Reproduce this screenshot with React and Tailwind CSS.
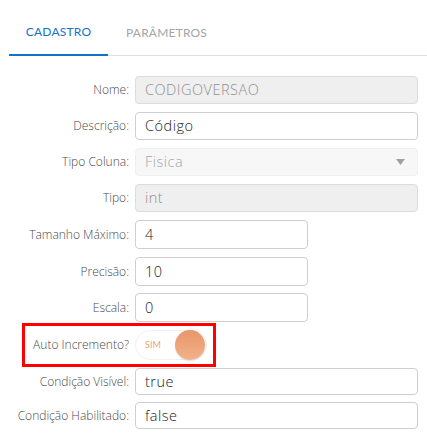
import React from "react";

const font = { fontFamily: "Lato, 'Noto Sans', sans-serif" };
const fieldFont = { fontFamily: "'Open Sans', 'Noto Sans', sans-serif" };

function Label({ children }) {
  return (
    <div
      className="w-[129px] shrink-0 text-right text-[12px] font-light text-[#4a4a4a] whitespace-nowrap"
      style={fieldFont}
    >
      {children}
    </div>
  );
}

function Input({ value, disabled, narrow, h = "h-[28px]" }) {
  return (
    <div
      style={fieldFont}
      className={`${h} ${narrow ? "w-[173px]" : "w-[283px]"} flex items-center rounded-[4px] border px-[9px] text-[14.5px] font-light tracking-[0.5px] ${
        disabled
          ? "bg-[#efefef] border-[#dcdcdc] text-[#8f8f8f]"
          : "bg-white border-[#cfcfcf] text-[#222]"
      }`}
    >
      {value}
    </div>
  );
}

function Row({ label, children, className = "" }) {
  return (
    <div className={`flex items-center gap-[6px] ${className}`}>
      <Label>{label}</Label>
      {children}
    </div>
  );
}

export default function App() {
  return (
    <div className="w-[427px] h-[434px] bg-white overflow-hidden" style={font}>
      <div className="ml-[9px] flex h-[56px] border-b border-[#e2e2e2]">
        <div className="h-[56px] w-[99px] -mb-px flex items-center justify-center pt-[10px] border-b-2 border-[#1572c9] text-[12px] text-[#1572c9] tracking-[0.2px]">
          CADASTRO
        </div>
        <div className="h-[55px] px-[18px] flex items-center pt-[10px] text-[12px] text-[#a5a5a5] tracking-[0.2px]">
          PARÂMETROS
        </div>
      </div>

      <div className="flex flex-col">
        <Row label="Nome:" className="mt-[20px]">
          <Input value="CODIGOVERSAO" disabled />
        </Row>
        <Row label="Descrição:" className="mt-[8px]">
          <Input value="Código" />
        </Row>
        <Row label="Tipo Coluna:" className="mt-[8px]">
          <div
            style={fieldFont}
            className="h-[28px] w-[283px] flex items-center justify-between rounded-[4px] border border-[#f0f0f0] bg-[#f7f7f7] pl-[9px] pr-[12px] text-[14.5px] font-light tracking-[0.5px] text-[#a5a5a5]"
          >
            <span>Fisica</span>
            <svg width="9" height="6" viewBox="0 0 9 6">
              <path d="M0 0 H9 L4.5 6 Z" fill="#a0a0a0" />
            </svg>
          </div>
        </Row>
        <Row label="Tipo:" className="mt-[8px]">
          <Input value="int" disabled />
        </Row>
        <Row label="Tamanho Máximo:" className="mt-[8px]">
          <Input value="4" narrow h="h-[29px]" />
        </Row>
        <Row label="Precisão:" className="mt-[8px]">
          <Input value="10" narrow h="h-[29px]" />
        </Row>
        <Row label="Escala:" className="mt-[7px]">
          <Input value="0" narrow h="h-[29px]" />
        </Row>
        <div className="relative mt-[7px] flex h-[31px] items-center gap-[6px]">
          <Label>Auto Incremento?</Label>
          <div className="relative h-[30px] w-[72px] rounded-full border border-[#f1f1f1] bg-white">
            <span className="absolute left-[9px] top-1/2 -translate-y-1/2 text-[9px] text-[#f0a07c]">
              SIM
            </span>
            <span className="absolute right-[1px] top-[-1px] h-[30px] w-[30px] rounded-full bg-gradient-to-b from-[#e9956b] to-[#f2b189] shadow-[0_1px_2px_rgba(0,0,0,0.15)]" />
          </div>
          <div className="pointer-events-none absolute left-[22px] top-[-6px] h-[44px] w-[194px] border-[3px] border-[#ff0000]" />
        </div>
        <Row label="Condição Visível:" className="mt-[8px]">
          <Input value="true" h="h-[27px]" />
        </Row>
        <Row label="Condição Habilitado:" className="mt-[7px]">
          <Input value="false" h="h-[27px]" />
        </Row>
      </div>
    </div>
  );
}
